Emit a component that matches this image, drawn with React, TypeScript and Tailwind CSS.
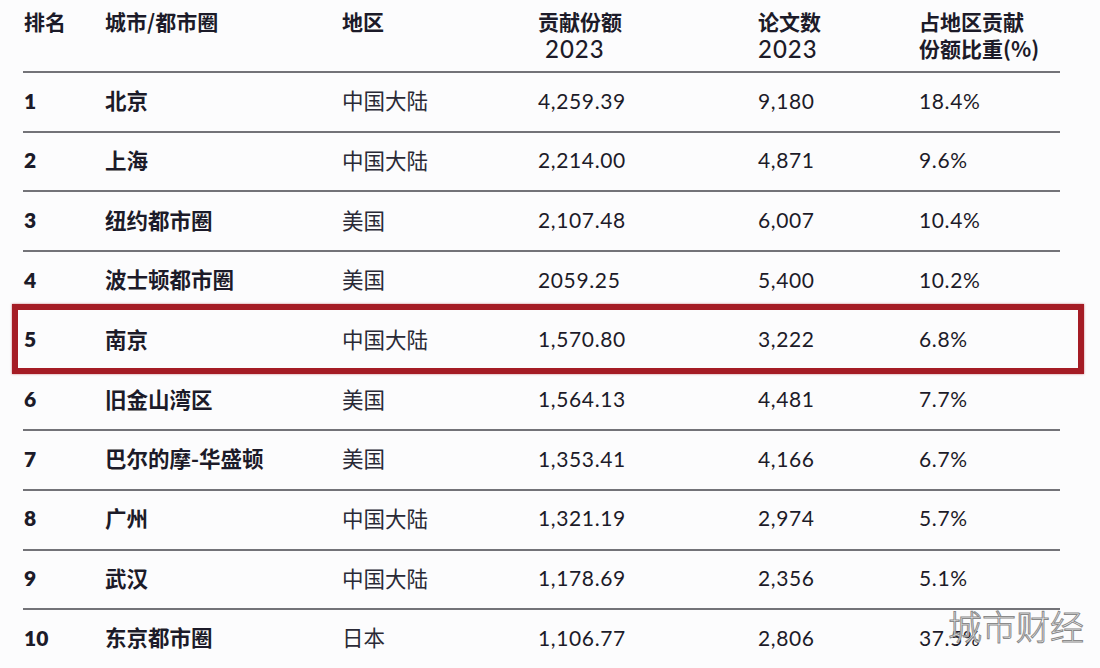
import React from 'react'

interface row {
    rank  : number;
    city  : string;
    region: string;
    share : string;
    papers: string;
    ratio : string;
}

const rows: row[] = [
    { rank: 1,  city: '北京',          region: '中国大陆', share: '4,259.39', papers: '9,180', ratio: '18.4%' },
    { rank: 2,  city: '上海',          region: '中国大陆', share: '2,214.00', papers: '4,871', ratio: '9.6%' },
    { rank: 3,  city: '纽约都市圈',    region: '美国',     share: '2,107.48', papers: '6,007', ratio: '10.4%' },
    { rank: 4,  city: '波士顿都市圈',  region: '美国',     share: '2059.25',  papers: '5,400', ratio: '10.2%' },
    { rank: 5,  city: '南京',          region: '中国大陆', share: '1,570.80', papers: '3,222', ratio: '6.8%' },
    { rank: 6,  city: '旧金山湾区',    region: '美国',     share: '1,564.13', papers: '4,481', ratio: '7.7%' },
    { rank: 7,  city: '巴尔的摩-华盛顿', region: '美国',   share: '1,353.41', papers: '4,166', ratio: '6.7%' },
    { rank: 8,  city: '广州',          region: '中国大陆', share: '1,321.19', papers: '2,974', ratio: '5.7%' },
    { rank: 9,  city: '武汉',          region: '中国大陆', share: '1,178.69', papers: '2,356', ratio: '5.1%' },
    { rank: 10, city: '东京都市圈',    region: '日本',     share: '1,106.77', papers: '2,806', ratio: '37.5%' },
]

const cjk = "font-['Noto_Sans_CJK_SC',sans-serif]"
const num = "font-['Lato','Noto_Sans_CJK_SC',sans-serif] text-[21px] tracking-[0.03em]"
const cols = 'grid grid-cols-[81px_237px_196px_220px_161px_1fr] pl-[1px]'

const Ranking = () => {
  return (
    <div className="relative w-[1100px] h-[668px] overflow-hidden bg-[#fcfcfd] text-[#1c1b29]">
        <div className="ml-[23px] w-[1037px]">

            {/* header */}
            <div className={`${cols} h-[73px] pt-[8px] border-b-2 border-[#737378] leading-[27px] items-start`}>
                <div className={`${cjk} font-bold text-[21px]`}>排名</div>
                <div className={`${cjk} font-bold text-[21px]`}>城市/都市圈</div>
                <div className={`${cjk} font-bold text-[21px]`}>地区</div>
                <div className="flex flex-col">
                    <span className={`${cjk} font-bold text-[21px]`}>贡献份额</span>
                    <span className="font-['Lato',sans-serif] font-medium text-[24px] tracking-[0.04em] pl-[7px]">2023</span>
                </div>
                <div className="flex flex-col">
                    <span className={`${cjk} font-bold text-[21px]`}>论文数</span>
                    <span className="font-['Lato',sans-serif] font-medium text-[24px] tracking-[0.04em]">2023</span>
                </div>
                <div className="flex flex-col">
                    <span className={`${cjk} font-bold text-[21px]`}>占地区贡献</span>
                    <span className={`${cjk} font-bold text-[21px]`}>份额比重(%)</span>
                </div>
            </div>

            {/* rows */}
            {rows.map((r, i) => {
                const hidden = r.rank === 4 || r.rank === 5 || i === rows.length - 1
                return (
                    <div
                        key={r.rank}
                        className={`${cols} relative h-[59.7px] pb-[3px] items-center border-b-2 ${hidden ? 'border-transparent' : 'border-[#737378]'}`}
                    >
                        <div className="font-['Lato',sans-serif] font-extrabold text-[21px]">{r.rank}</div>
                        <div className={`${cjk} font-bold text-[21.5px]`}>{r.city}</div>
                        <div className={`${cjk} text-[21.5px] text-[#2a2a36]`}>{r.region}</div>
                        <div className={num}>{r.share}</div>
                        <div className={num}>{r.papers}</div>
                        <div className={num}>{r.ratio}</div>

                        {r.rank === 5 && (
                            <div className="absolute left-[-11px] right-[-24px] top-[-8px] bottom-[-5px] border-[6px] border-[#a51c25] shadow-[0_0_2px_rgba(165,28,37,0.6)]" />
                        )}
                    </div>
                )
            })}
        </div>

        {/* watermark */}
        <div className={`absolute left-[948px] top-[604px] ${cjk} font-light text-[34px] leading-[44px] text-white [-webkit-text-stroke:1px_#8a8a8a]`}>
            城市财经
        </div>
    </div>
  )
}

export default function App() {
  return <Ranking />
}
